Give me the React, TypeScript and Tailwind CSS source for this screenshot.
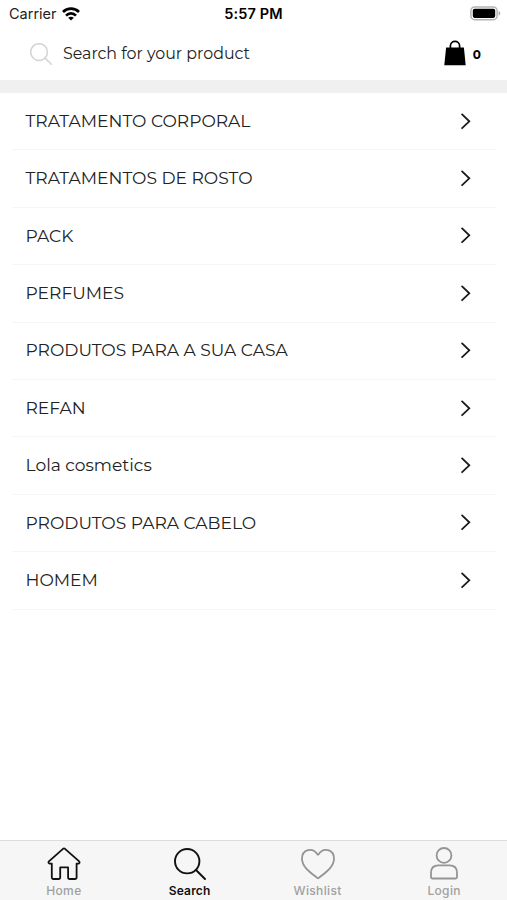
import React, { useState } from 'react';

const categories = [
  'TRATAMENTO CORPORAL',
  'TRATAMENTOS DE ROSTO',
  'PACK',
  'PERFUMES',
  'PRODUTOS PARA A SUA CASA',
  'REFAN',
  'Lola cosmetics',
  'PRODUTOS PARA CABELO',
  'HOMEM'
];

const WifiIcon = () => (
  <svg width="18" height="14" viewBox="0 0 18 14" fill="none" stroke="#000" strokeWidth="2.6">
    <path d="M1 5 C5.3 .5 12.7 .5 17 5" />
    <path d="M4 8.6 C6.8 5.6 11.2 5.6 14 8.6" />
    <path d="M9 13.6 L6.2 10.8 C7.8 9.3 10.2 9.3 11.8 10.8 Z" fill="#000" stroke="none" />
  </svg>
);

const BatteryIcon = () => (
  <svg width="31" height="15" viewBox="0 0 31 15">
    <rect x=".9" y=".9" width="26.2" height="12.8" rx="3.8" fill="#fff" stroke="#b4b4b4" strokeWidth="1.5" />
    <rect x="2.8" y="2.7" width="22.4" height="9.2" rx="1.8" fill="#000" />
    <path d="M28.6 5 C30.8 5.8 30.8 8.8 28.6 9.6 Z" fill="#a8a8a8" />
  </svg>
);

const BagIcon = () => (
  <svg width="22" height="26" viewBox="0 0 22 26">
    <path d="M6.4 8.5 V6 C6.4 -.1 15.6 -.1 15.6 6 V8.5" fill="none" stroke="#000" strokeWidth="1.7" />
    <path d="M2.1 7.4 H19.9 L21.7 25.2 H.3 Z" fill="#000" />
  </svg>
);

const SearchIcon = ({ size, width }: { size: number; width: number }) => (
  <svg width={size} height={size} viewBox="0 0 32 32" fill="none" stroke="currentColor" strokeWidth={width} strokeLinecap="round">
    <circle cx="13.2" cy="13.2" r="12.2" />
    <path d="M22 22 L31 31" />
  </svg>
);

const ChevronIcon = () => (
  <svg width="10" height="17" viewBox="0 0 10 17" fill="none" stroke="#1a1a1a" strokeWidth="1.8" strokeLinecap="round">
    <path d="M1.1 1.4 L8.3 8.3 L1.1 15.2" />
  </svg>
);

const HomeIcon = () => (
  <svg width="34" height="34" viewBox="0 0 34 34" fill="none" stroke="#111" strokeWidth="1.8" strokeLinejoin="round">
    <path d="M16 1.8 Q17 1 18 1.8 L32.2 14.4 Q33.2 15.8 31.6 16.6 H29.6 V30.2 Q29.6 32 27.8 32 H22.8 Q21.1 32 21.1 30.2 V20.4 H13.2 V30.2 Q13.2 32 11.4 32 H6.5 Q4.8 32 4.8 30.2 V16.6 H2.6 Q.8 15.8 1.9 14.4 Z" />
  </svg>
);

const HeartIcon = () => (
  <svg width="34" height="32" viewBox="0 0 34 32" fill="none" stroke="#949494" strokeWidth="1.8" strokeLinejoin="round">
    <path d="M16.4 6.3 Q17 6.9 17.6 6.3 C22.4 -1.2 33 1.2 33 10.8 C33 19.6 23 25.6 18 29.8 Q17 30.5 16 29.8 C11 25.6 1 19.6 1 10.8 C1 1.2 11.6 -1.2 16.4 6.3 Z" />
  </svg>
);

const UserIcon = () => (
  <svg width="28" height="33" viewBox="0 0 28 33" fill="none" stroke="#949494" strokeWidth="1.8" strokeLinejoin="round">
    <circle cx="14" cy="8.4" r="7.4" />
    <path d="M8.4 18.4 H19.6 Q27 18.4 27 25.8 V30 Q27 31.5 25.5 31.5 H2.5 Q1 31.5 1 30 V25.8 Q1 18.4 8.4 18.4 Z" />
  </svg>
);

const tabs = [
  { name: 'Home', icon: <HomeIcon />, tracking: 'tracking-[0.4px]', nudge: 'pl-px' },
  { name: 'Search', icon: <SearchIcon size={32} width={1.9} />, tracking: 'tracking-[0.2px]', nudge: 'pr-px' },
  { name: 'Wishlist', icon: <HeartIcon />, tracking: 'tracking-[0.35px]', nudge: 'pl-[1.5px]' },
  { name: 'Login', icon: <UserIcon />, tracking: 'tracking-[0.35px]', nudge: 'pl-px' }
];

const App = () => {
  const [active, setActive] = useState('Search');

  return (
    <div className="flex h-[900px] w-[507px] flex-col overflow-hidden bg-white font-['Montserrat','Inter',sans-serif]">
      <header className="h-20 shrink-0">
        <div className="grid h-[27px] grid-cols-3 items-center pr-[6px] pl-[9px] font-['Inter',sans-serif]">
          <div className="flex items-center gap-[5px] text-[14.5px] text-[#222]">
            <span>Carrier</span>
            <WifiIcon />
          </div>
          <span className="pr-[3px] text-center text-[14.5px] font-semibold tracking-[0.15px] text-black">5:57 PM</span>
          <div className="flex justify-end">
            <BatteryIcon />
          </div>
        </div>
        <div className="flex h-[53px] items-center pl-[30px]">
          <span className="text-[#d4d4d4]">
            <SearchIcon size={22} width={2.2} />
          </span>
          <span className="ml-[11px] flex-1 pt-px text-[15.85px] text-[#222]">Search for your product</span>
          <span className="pb-[2px]">
            <BagIcon />
          </span>
          <span className="mr-[26px] ml-[7px] pt-[3px] text-[12px] font-bold text-black">0</span>
        </div>
      </header>

      <main className="flex-1 border-t-[13px] border-[#f0f0f0]">
        {categories.map(category => (
          <button
            key={category}
            className="mx-3 flex h-[57.4px] w-[484px] items-center justify-between border-b-[1.5px] border-[#f5f5f5] pr-[25px] pl-[13.5px] text-[17.1px] text-[#222]"
          >
            <span className="pb-px">{category}</span>
            <ChevronIcon />
          </button>
        ))}
      </main>

      <nav className="flex h-[60px] shrink-0 border-t border-[#dcdcdc] bg-[#f6f6f6] font-['Inter',sans-serif]">
        {tabs.map(tab => (
          <button
            key={tab.name}
            className={`flex w-1/4 flex-col items-center pt-[5.5px] ${tab.nudge}`}
            onClick={() => setActive(tab.name)}
          >
            <span className="flex h-[34px] items-center text-[#111]">{tab.icon}</span>
            <span
              className={`mt-[2.5px] text-[12px] leading-4 ${tab.tracking} ${
                active === tab.name ? 'font-semibold text-[#111]' : 'font-medium text-[#a0a0a0]'
              }`}
            >
              {tab.name}
            </span>
          </button>
        ))}
      </nav>
    </div>
  );
};

export default App;
